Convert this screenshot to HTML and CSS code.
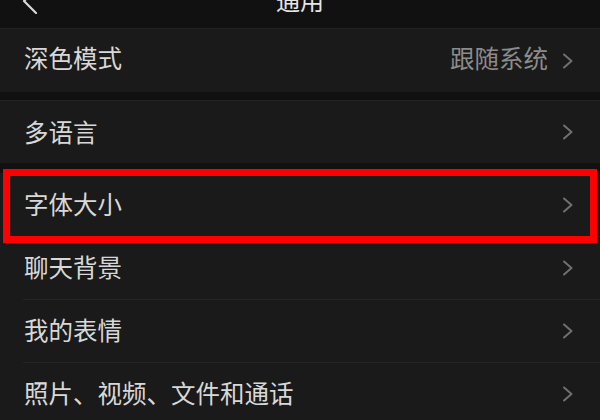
FILE: index.html
```html
<!DOCTYPE html>
<html lang="zh-CN">
<head>
    <meta charset="UTF-8">
    <meta name="viewport" content="width=device-width, initial-scale=1.0">
    <title>通用</title>
    <link rel="stylesheet" href="styles.css">
</head>
<body>
    <div class="screen">
        <header class="nav">
            <div class="nav-inner">
                <svg class="nav-back" width="16" height="26" viewBox="0 0 16 26">
                    <path d="M14 1 L2 13 L14 25" fill="none" stroke="#d8d8d8" stroke-width="2.2" stroke-linecap="round" stroke-linejoin="round"/>
                </svg>
                <span class="nav-title">通用</span>
            </div>
        </header>

        <section class="group group-first">
            <div class="row">
                <span class="row-label">深色模式</span>
                <span class="row-value">跟随系统</span>
                <svg class="chevron" width="12" height="16" viewBox="0 0 12 16"><path d="M2 1.5 L9.5 8 L2 14.5" fill="none" stroke="#707070" stroke-width="2" stroke-linecap="round" stroke-linejoin="round"/></svg>
            </div>
        </section>

        <section class="group group-lined">
            <div class="row">
                <span class="row-label">多语言</span>
                <svg class="chevron" width="12" height="16" viewBox="0 0 12 16"><path d="M2 1.5 L9.5 8 L2 14.5" fill="none" stroke="#707070" stroke-width="2" stroke-linecap="round" stroke-linejoin="round"/></svg>
            </div>
        </section>

        <section class="group group-spaced">
            <div class="row row-highlight">
                <span class="row-label">字体大小</span>
                <svg class="chevron" width="12" height="16" viewBox="0 0 12 16"><path d="M2 1.5 L9.5 8 L2 14.5" fill="none" stroke="#707070" stroke-width="2" stroke-linecap="round" stroke-linejoin="round"/></svg>
            </div>
            <div class="row">
                <span class="row-label">聊天背景</span>
                <svg class="chevron" width="12" height="16" viewBox="0 0 12 16"><path d="M2 1.5 L9.5 8 L2 14.5" fill="none" stroke="#707070" stroke-width="2" stroke-linecap="round" stroke-linejoin="round"/></svg>
            </div>
            <div class="row">
                <span class="row-label">我的表情</span>
                <svg class="chevron" width="12" height="16" viewBox="0 0 12 16"><path d="M2 1.5 L9.5 8 L2 14.5" fill="none" stroke="#707070" stroke-width="2" stroke-linecap="round" stroke-linejoin="round"/></svg>
            </div>
            <div class="row">
                <span class="row-label">照片、视频、文件和通话</span>
                <svg class="chevron" width="12" height="16" viewBox="0 0 12 16"><path d="M2 1.5 L9.5 8 L2 14.5" fill="none" stroke="#707070" stroke-width="2" stroke-linecap="round" stroke-linejoin="round"/></svg>
            </div>
        </section>
    </div>
</body>
</html>
```

FILE: styles.css
```css
body {
    margin: 0;
    padding: 0;
    background-color: #111111;
    font-family: "Noto Sans CJK SC", "Noto Sans", sans-serif;
}

.screen {
    width: 600px;
    height: 420px;
    overflow: hidden;
    background-color: #111111;
}

.nav {
    height: 28px;
    overflow: hidden;
    border-bottom: 1px solid #222222;
    background-color: #111111;
}

.nav-inner {
    height: 56px;
    margin-top: -28px;
    display: flex;
    align-items: center;
    justify-content: center;
    position: relative;
}

.nav-back {
    position: absolute;
    left: 22px;
    top: 16px;
}

.nav-title {
    font-size: 24px;
    color: #e6e6e6;
    line-height: 1;
}

.group {
    background-color: #1a1a1a;
}

.group-lined {
    margin-top: 8px;
    border-top: 1px solid #232323;
}

.group-spaced {
    margin-top: 10px;
}

.row {
    height: 63px;
    display: flex;
    align-items: center;
    padding: 0 26px 0 24px;
    box-sizing: border-box;
    background: linear-gradient(#252525, #252525) 23px 0 / 100% 1px no-repeat, #1a1a1a;
}

.group .row:first-child {
    background: #1a1a1a;
}

.group-lined .row {
    height: 62px;
}

.row-label {
    flex: 1;
    font-size: 24.5px;
    color: #d8d8d8;
    line-height: 1;
}

.row-value {
    font-size: 24.5px;
    color: #8c8c8c;
    line-height: 1;
    margin-right: 14px;
}

.group-first .row-label,
.group-first .row-value {
    padding-bottom: 5px;
}

.chevron {
    display: block;
}

.row-highlight {
    position: relative;
}

.row-highlight::after {
    content: "";
    position: absolute;
    top: -4px;
    bottom: -7px;
    left: 3px;
    right: 3px;
    border: 7px solid #ff0000;
}
```
